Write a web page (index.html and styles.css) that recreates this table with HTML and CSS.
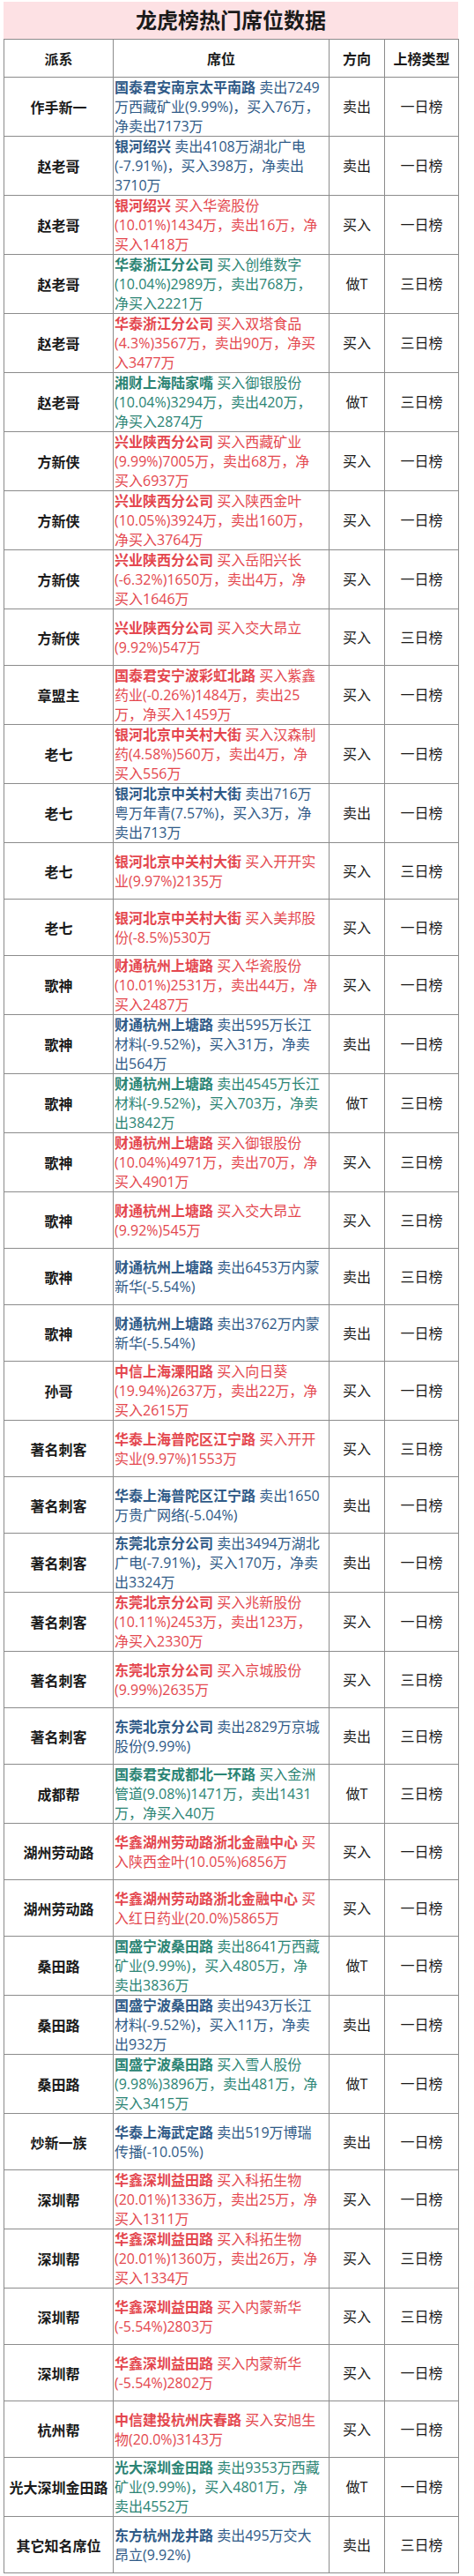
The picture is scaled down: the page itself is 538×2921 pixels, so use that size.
FILE: index.html
```html
<!DOCTYPE html>
<html lang="zh-CN">
<head>
<meta charset="utf-8">
<title>龙虎榜热门席位数据</title>
<link rel="stylesheet" href="styles.css">
</head>
<body>
<div class="page">
  <h1 class="title">龙虎榜热门席位数据</h1>
  <table class="board">
    <colgroup><col class="c1"><col class="c2"><col class="c3"><col class="c4"></colgroup>
    <thead>
      <tr><th>派系</th><th>席位</th><th>方向</th><th>上榜类型</th></tr>
    </thead>
    <tbody>
      <tr class="sell"><td class="name">作手新一</td><td class="seat"><b>国泰君安南京太平南路</b> 卖出7249<br>万西藏矿业(9.99%)，买入76万，<br>净卖出7173万</td><td>卖出</td><td>一日榜</td></tr>
      <tr class="sell"><td class="name">赵老哥</td><td class="seat"><b>银河绍兴</b> 卖出4108万湖北广电<br>(-7.91%)，买入398万，净卖出<br>3710万</td><td>卖出</td><td>一日榜</td></tr>
      <tr class="buy"><td class="name">赵老哥</td><td class="seat"><b>银河绍兴</b> 买入华瓷股份<br>(10.01%)1434万，卖出16万，净<br>买入1418万</td><td>买入</td><td>一日榜</td></tr>
      <tr class="swing"><td class="name">赵老哥</td><td class="seat"><b>华泰浙江分公司</b> 买入创维数字<br>(10.04%)2989万，卖出768万，<br>净买入2221万</td><td>做T</td><td>三日榜</td></tr>
      <tr class="buy"><td class="name">赵老哥</td><td class="seat"><b>华泰浙江分公司</b> 买入双塔食品<br>(4.3%)3567万，卖出90万，净买<br>入3477万</td><td>买入</td><td>三日榜</td></tr>
      <tr class="swing"><td class="name">赵老哥</td><td class="seat"><b>湘财上海陆家嘴</b> 买入御银股份<br>(10.04%)3294万，卖出420万，<br>净买入2874万</td><td>做T</td><td>三日榜</td></tr>
      <tr class="buy"><td class="name">方新侠</td><td class="seat"><b>兴业陕西分公司</b> 买入西藏矿业<br>(9.99%)7005万，卖出68万，净<br>买入6937万</td><td>买入</td><td>一日榜</td></tr>
      <tr class="buy"><td class="name">方新侠</td><td class="seat"><b>兴业陕西分公司</b> 买入陕西金叶<br>(10.05%)3924万，卖出160万，<br>净买入3764万</td><td>买入</td><td>一日榜</td></tr>
      <tr class="buy"><td class="name">方新侠</td><td class="seat"><b>兴业陕西分公司</b> 买入岳阳兴长<br>(-6.32%)1650万，卖出4万，净<br>买入1646万</td><td>买入</td><td>一日榜</td></tr>
      <tr class="buy"><td class="name">方新侠</td><td class="seat"><b>兴业陕西分公司</b> 买入交大昂立<br>(9.92%)547万</td><td>买入</td><td>三日榜</td></tr>
      <tr class="buy"><td class="name">章盟主</td><td class="seat"><b>国泰君安宁波彩虹北路</b> 买入紫鑫<br>药业(-0.26%)1484万，卖出25<br>万，净买入1459万</td><td>买入</td><td>一日榜</td></tr>
      <tr class="buy"><td class="name">老七</td><td class="seat"><b>银河北京中关村大街</b> 买入汉森制<br>药(4.58%)560万，卖出4万，净<br>买入556万</td><td>买入</td><td>一日榜</td></tr>
      <tr class="sell"><td class="name">老七</td><td class="seat"><b>银河北京中关村大街</b> 卖出716万<br>粤万年青(7.57%)，买入3万，净<br>卖出713万</td><td>卖出</td><td>一日榜</td></tr>
      <tr class="buy"><td class="name">老七</td><td class="seat"><b>银河北京中关村大街</b> 买入开开实<br>业(9.97%)2135万</td><td>买入</td><td>三日榜</td></tr>
      <tr class="buy"><td class="name">老七</td><td class="seat"><b>银河北京中关村大街</b> 买入美邦股<br>份(-8.5%)530万</td><td>买入</td><td>一日榜</td></tr>
      <tr class="buy"><td class="name">歌神</td><td class="seat"><b>财通杭州上塘路</b> 买入华瓷股份<br>(10.01%)2531万，卖出44万，净<br>买入2487万</td><td>买入</td><td>一日榜</td></tr>
      <tr class="sell"><td class="name">歌神</td><td class="seat"><b>财通杭州上塘路</b> 卖出595万长江<br>材料(-9.52%)，买入31万，净卖<br>出564万</td><td>卖出</td><td>一日榜</td></tr>
      <tr class="swing"><td class="name">歌神</td><td class="seat"><b>财通杭州上塘路</b> 卖出4545万长江<br>材料(-9.52%)，买入703万，净卖<br>出3842万</td><td>做T</td><td>三日榜</td></tr>
      <tr class="buy"><td class="name">歌神</td><td class="seat"><b>财通杭州上塘路</b> 买入御银股份<br>(10.04%)4971万，卖出70万，净<br>买入4901万</td><td>买入</td><td>三日榜</td></tr>
      <tr class="buy"><td class="name">歌神</td><td class="seat"><b>财通杭州上塘路</b> 买入交大昂立<br>(9.92%)545万</td><td>买入</td><td>三日榜</td></tr>
      <tr class="sell"><td class="name">歌神</td><td class="seat"><b>财通杭州上塘路</b> 卖出6453万内蒙<br>新华(-5.54%)</td><td>卖出</td><td>三日榜</td></tr>
      <tr class="sell"><td class="name">歌神</td><td class="seat"><b>财通杭州上塘路</b> 卖出3762万内蒙<br>新华(-5.54%)</td><td>卖出</td><td>一日榜</td></tr>
      <tr class="buy"><td class="name">孙哥</td><td class="seat"><b>中信上海溧阳路</b> 买入向日葵<br>(19.94%)2637万，卖出22万，净<br>买入2615万</td><td>买入</td><td>一日榜</td></tr>
      <tr class="buy"><td class="name">著名刺客</td><td class="seat"><b>华泰上海普陀区江宁路</b> 买入开开<br>实业(9.97%)1553万</td><td>买入</td><td>三日榜</td></tr>
      <tr class="sell"><td class="name">著名刺客</td><td class="seat"><b>华泰上海普陀区江宁路</b> 卖出1650<br>万贵广网络(-5.04%)</td><td>卖出</td><td>一日榜</td></tr>
      <tr class="sell"><td class="name">著名刺客</td><td class="seat"><b>东莞北京分公司</b> 卖出3494万湖北<br>广电(-7.91%)，买入170万，净卖<br>出3324万</td><td>卖出</td><td>一日榜</td></tr>
      <tr class="buy"><td class="name">著名刺客</td><td class="seat"><b>东莞北京分公司</b> 买入兆新股份<br>(10.11%)2453万，卖出123万，<br>净买入2330万</td><td>买入</td><td>一日榜</td></tr>
      <tr class="buy"><td class="name">著名刺客</td><td class="seat"><b>东莞北京分公司</b> 买入京城股份<br>(9.99%)2635万</td><td>买入</td><td>三日榜</td></tr>
      <tr class="sell"><td class="name">著名刺客</td><td class="seat"><b>东莞北京分公司</b> 卖出2829万京城<br>股份(9.99%)</td><td>卖出</td><td>三日榜</td></tr>
      <tr class="swing"><td class="name">成都帮</td><td class="seat"><b>国泰君安成都北一环路</b> 买入金洲<br>管道(9.08%)1471万，卖出1431<br>万，净买入40万</td><td>做T</td><td>三日榜</td></tr>
      <tr class="buy"><td class="name">湖州劳动路</td><td class="seat"><b>华鑫湖州劳动路浙北金融中心</b> 买<br>入陕西金叶(10.05%)6856万</td><td>买入</td><td>一日榜</td></tr>
      <tr class="buy"><td class="name">湖州劳动路</td><td class="seat"><b>华鑫湖州劳动路浙北金融中心</b> 买<br>入红日药业(20.0%)5865万</td><td>买入</td><td>一日榜</td></tr>
      <tr class="swing"><td class="name">桑田路</td><td class="seat"><b>国盛宁波桑田路</b> 卖出8641万西藏<br>矿业(9.99%)，买入4805万，净<br>卖出3836万</td><td>做T</td><td>一日榜</td></tr>
      <tr class="sell"><td class="name">桑田路</td><td class="seat"><b>国盛宁波桑田路</b> 卖出943万长江<br>材料(-9.52%)，买入11万，净卖<br>出932万</td><td>卖出</td><td>一日榜</td></tr>
      <tr class="swing"><td class="name">桑田路</td><td class="seat"><b>国盛宁波桑田路</b> 买入雪人股份<br>(9.98%)3896万，卖出481万，净<br>买入3415万</td><td>做T</td><td>一日榜</td></tr>
      <tr class="sell"><td class="name">炒新一族</td><td class="seat"><b>华泰上海武定路</b> 卖出519万博瑞<br>传播(-10.05%)</td><td>卖出</td><td>一日榜</td></tr>
      <tr class="buy"><td class="name">深圳帮</td><td class="seat"><b>华鑫深圳益田路</b> 买入科拓生物<br>(20.01%)1336万，卖出25万，净<br>买入1311万</td><td>买入</td><td>一日榜</td></tr>
      <tr class="buy"><td class="name">深圳帮</td><td class="seat"><b>华鑫深圳益田路</b> 买入科拓生物<br>(20.01%)1360万，卖出26万，净<br>买入1334万</td><td>买入</td><td>三日榜</td></tr>
      <tr class="buy"><td class="name">深圳帮</td><td class="seat"><b>华鑫深圳益田路</b> 买入内蒙新华<br>(-5.54%)2803万</td><td>买入</td><td>三日榜</td></tr>
      <tr class="buy"><td class="name">深圳帮</td><td class="seat"><b>华鑫深圳益田路</b> 买入内蒙新华<br>(-5.54%)2802万</td><td>买入</td><td>一日榜</td></tr>
      <tr class="buy"><td class="name">杭州帮</td><td class="seat"><b>中信建投杭州庆春路</b> 买入安旭生<br>物(20.0%)3143万</td><td>买入</td><td>一日榜</td></tr>
      <tr class="swing"><td class="name">光大深圳金田路</td><td class="seat"><b>光大深圳金田路</b> 卖出9353万西藏<br>矿业(9.99%)，买入4801万，净<br>卖出4552万</td><td>做T</td><td>一日榜</td></tr>
      <tr class="sell"><td class="name">其它知名席位</td><td class="seat"><b>东方杭州龙井路</b> 卖出495万交大<br>昂立(9.92%)</td><td>卖出</td><td>三日榜</td></tr>
    </tbody>
  </table>
</div>
</body>
</html>
```

FILE: styles.css
```css
html, body {
  margin: 0;
  padding: 0;
  background: #ffffff;
}

body {
  font-family: "Open Sans", "Noto Sans CJK SC", sans-serif;
  color: #1a1a1a;
}

.page {
  width: 516px;
  padding: 2px 0 0 4px;
}

.title {
  margin: 0;
  height: 42px;
  line-height: 40px;
  background: #fde1e4;
  text-align: center;
  font-size: 24px;
  font-weight: 700;
  color: #1a1a1a;
  font-family: "Noto Sans CJK SC", sans-serif;
}

.board {
  width: 516px;
  table-layout: fixed;
  border-collapse: collapse;
  border: 1px solid #555555;
  font-size: 16px;
  line-height: 22px;
}

.c1 { width: 124px; }
.c2 { width: 245px; }
.c3 { width: 63px; }
.c4 { width: 84px; }

.board th,
.board td {
  border: 1px solid #8c8c8c;
  padding: 0;
  text-align: center;
  vertical-align: middle;
}

.board th {
  height: 42px;
  font-weight: 700;
  font-family: "Noto Sans CJK SC", sans-serif;
}

.board td {
  height: 63px;
}

.board td.name {
  font-weight: 700;
  font-family: "Noto Sans CJK SC", sans-serif;
}

.board td.seat {
  text-align: left;
  padding-left: 1px;
}

.board td.seat b {
  font-weight: 700;
}

.buy .seat { color: #e4474e; }
.sell .seat { color: #2f5a87; }
.swing .seat { color: #2b8474; }
```
